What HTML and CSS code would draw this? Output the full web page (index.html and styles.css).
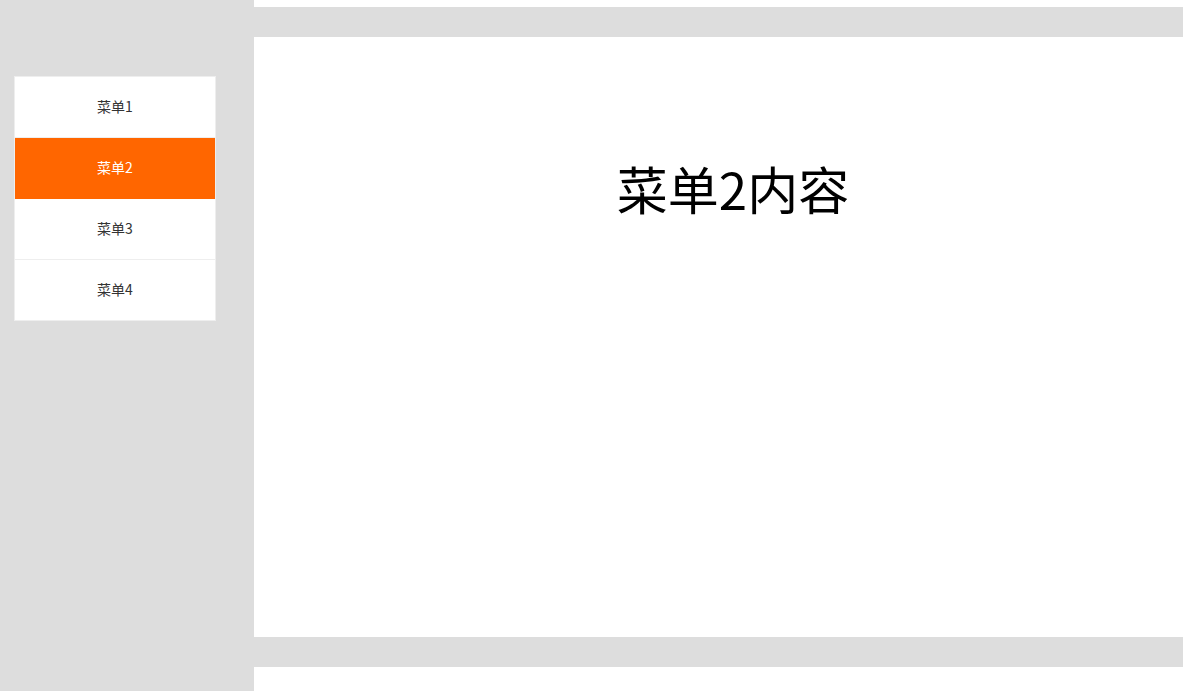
FILE: index.html
```html
<!DOCTYPE html>
<html lang="zh">
<head>
<meta charset="utf-8">
<title>菜单</title>
<link rel="stylesheet" href="styles.css">
</head>
<body>
<div class="page">
  <aside class="sidebar">
    <ul class="menu">
      <li class="menu-item">菜单1</li>
      <li class="menu-item active">菜单2</li>
      <li class="menu-item">菜单3</li>
      <li class="menu-item">菜单4</li>
    </ul>
  </aside>
  <main class="main">
    <div class="strip-top"></div>
    <div class="band"></div>
    <section class="content">
      <h1 class="title">菜单2内容</h1>
    </section>
    <div class="band"></div>
    <div class="strip-bottom"></div>
  </main>
</div>
</body>
</html>
```
FILE: styles.css
```css
html, body {
  margin: 0;
  padding: 0;
  height: 100%;
  background: #fff;
  font-family: "Noto Sans CJK SC", "Noto Sans", sans-serif;
}
.page {
  display: flex;
  height: 691px;
  overflow: hidden;
}
.sidebar {
  width: 254px;
  flex: none;
  background: #dddddd;
  padding: 76px 0 0 14px;
  box-sizing: border-box;
}
.menu {
  list-style: none;
  margin: 0;
  padding: 0;
  width: 202px;
  box-sizing: border-box;
  border: 1px solid #eeeeee;
  border-bottom-width: 0;
  background: #fff;
}
.menu-item {
  height: 60px;
  line-height: 58px;
  border-bottom: 1px solid #eeeeee;
  text-align: center;
  font-size: 14px;
  color: #333;
}
.menu-item.active {
  background: #ff6600;
  border-bottom-color: #ff6600;
  color: #fff;
}
.main {
  flex: 1;
  display: flex;
  flex-direction: column;
}
.strip-top {
  height: 7px;
  background: #fff;
}
.band {
  height: 30px;
  background: #dddddd;
}
.content {
  height: 600px;
  background: #fff;
  padding-left: 29px;
  box-sizing: border-box;
}
.title {
  margin: 0;
  padding-top: 116px;
  text-align: center;
  font-size: 51px;
  font-weight: normal;
  line-height: 70px;
  color: #000;
}
.strip-bottom {
  flex: 1;
  background: #fff;
}
```
